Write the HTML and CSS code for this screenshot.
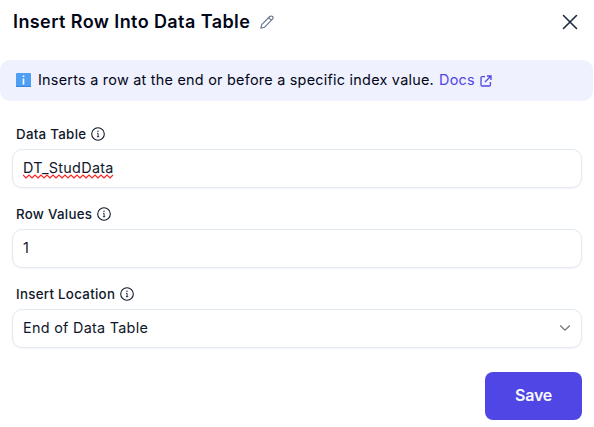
FILE: index.html
```html
<!DOCTYPE html>
<html lang="en">
<head>
<meta charset="utf-8">
<title>Insert Row Into Data Table</title>
<link rel="stylesheet" href="styles.css">
</head>
<body>
<svg class="defs" aria-hidden="true">
  <symbol id="info" viewBox="0 0 14 14">
    <circle cx="7" cy="7" r="6.3" fill="none" stroke="currentColor" stroke-width="1.1"/>
    <path d="M6.1 6.3H7.1V9.7M5.900 9.7H8.2" fill="none" stroke="currentColor" stroke-width=".9"/>
    <circle cx="7" cy="4.3" r=".7" fill="currentColor"/>
  </symbol>
</svg>
<main class="dialog">
  <header class="header">
    <h1 class="title">Insert Row Into Data Table</h1>
    <svg class="pencil" viewBox="0 0 14 14"><path d="M.8 13.2 1.7 9.6 9.8 1.5a1.9 1.9 0 0 1 2.7 2.7L4.4 12.3ZM8.6 2.7l2.7 2.7"/></svg>
    <svg class="close" viewBox="0 0 16 16"><path d="M1.5 1.5 14.5 14.5M14.5 1.5 1.5 14.5"/></svg>
  </header>
  <div class="banner">
    <svg class="badge" viewBox="0 0 15 14"><rect width="15" height="14" rx="1" fill="#4f9ff5"/><path d="M0 13h15v1H0z" fill="#3c83dc"/><path d="M6.7 5.5h1.600v6H6.700zM6.700 2.500h1.600v1.600H6.700z" fill="#fff"/></svg>
    <span class="banner-text">Inserts a row at the end or before a specific index value.</span>
    <a class="docs">Docs</a>
    <svg class="external" viewBox="0 0 12 12"><path d="M5 1.6H2.2Q1 1.6 1 2.8v7Q1 11 2.2 11h7q1.200 0 1.200-1.200V7M7 1H11V5M11 1 5 7"/></svg>
  </div>
  <form class="form">
    <div class="field">
      <div class="label"><span>Data Table</span><svg class="info"><use href="#info"/></svg></div>
      <div class="control"><span class="misspelled">DT_StudData<svg class="squiggle" viewBox="0 0 91 5"><path d="M0 1 3 4 6 1 9 4 12 1 15 4 18 1 21 4 24 1 27 4 30 1 33 4 36 1 39 4 42 1 45 4 48 1 51 4 54 1 57 4 60 1 63 4 66 1 69 4 72 1 75 4 78 1 81 4 84 1 87 4 90 1"/></svg></span></div>
    </div>
    <div class="field">
      <div class="label"><span>Row Values</span><svg class="info"><use href="#info"/></svg></div>
      <div class="control"><span>1</span></div>
    </div>
    <div class="field">
      <div class="label"><span>Insert Location</span><svg class="info"><use href="#info"/></svg></div>
      <div class="control"><span>End of Data Table</span><svg class="chevron" viewBox="0 0 12 8"><path d="M1.200 1.500 6 6.200 10.800 1.500"/></svg></div>
    </div>
    <button class="save" type="button">Save</button>
  </form>
</main>
</body>
</html>
```
FILE: styles.css
```css
* { box-sizing: border-box; }
body { margin: 0; background: #fff; color: #0f172a; font-family: Inter, sans-serif; }
.defs { position: absolute; width: 0; height: 0; }
.dialog { width: 594px; height: 427px; overflow: hidden; }
.header { height: 60px; padding: 0 16px 16px 13px; display: flex; align-items: center; }
.title { margin: 0; font-size: 18px; line-height: 28px; font-weight: 600; letter-spacing: .41px; color: #020617; white-space: nowrap; }
.pencil { width: 14px; height: 14px; margin: -1px 0 0 10px; fill: none; stroke: #64748b; stroke-width: 1.1; stroke-linejoin: round; }
.close { width: 16px; height: 16px; margin-left: auto; fill: none; stroke: #1e293b; stroke-width: 1.6; stroke-linecap: round; }
.banner { width: 593px; height: 41px; padding: 0 0 2px 16px; display: flex; align-items: center; background: #eff1ff; border-radius: 10px; font-size: 14.4px; letter-spacing: .25px; color: #020617; white-space: nowrap; }
.badge { width: 15px; height: 14px; margin: 1px 7px 0 0; }
.docs { margin-left: 5px; color: #4f46e5; }
.external { width: 12px; height: 12px; margin: 3px 0 0 5px; fill: none; stroke: #4f46e5; stroke-width: 1.3; }
.form { padding: 23px 12px 0; display: flex; flex-direction: column; }
.field { height: 80px; }
.label { height: 20px; margin: 0 0 5px 4px; display: flex; align-items: center; gap: 5px; font-size: 13.3px; font-weight: 500; letter-spacing: .29px; }
.info { width: 14px; height: 14px; }
.control { height: 39px; padding: 0 10px 2px; display: flex; align-items: center; justify-content: space-between; border: 1px solid #e2e8f0; border-radius: 10px; box-shadow: 0 1px 2px rgba(15,23,42,.05); font-size: 14.4px; letter-spacing: .28px; }
.misspelled { position: relative; }
.squiggle { position: absolute; left: 0; bottom: -3px; width: 91px; height: 5px; fill: none; stroke: #f22; stroke-width: 1.2; }
.chevron { width: 12px; height: 8px; margin-top: 1px; fill: none; stroke: #71757e; stroke-width: 1.3; }
.save { align-self: flex-end; width: 97px; height: 48px; margin-top: 8px; padding: 0 0 2px; border: 0; border-radius: 8px; background: #4f46e5; color: #f8fafc; font: 600 16px Inter, sans-serif; letter-spacing: -.25px; }
```
